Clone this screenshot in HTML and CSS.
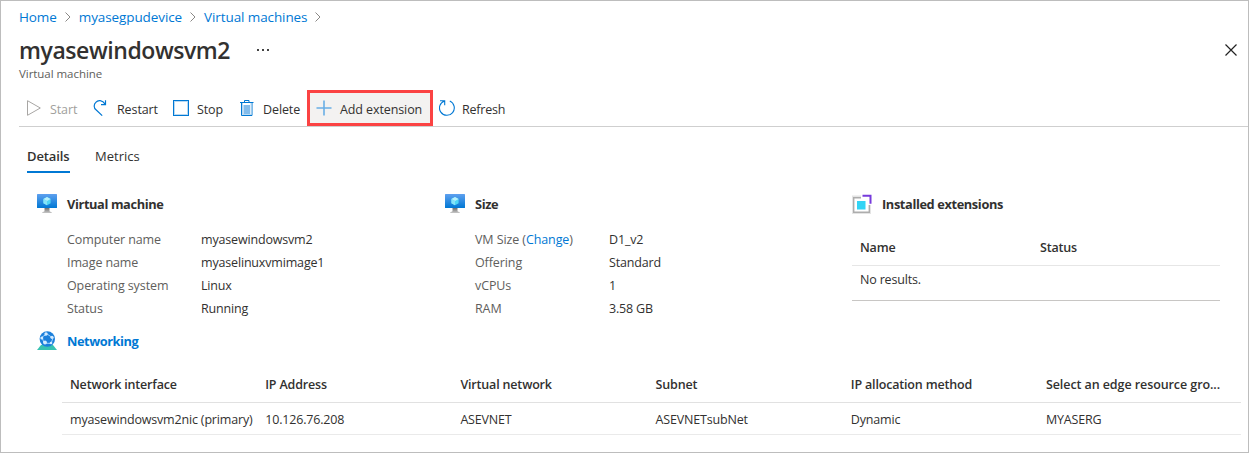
FILE: index.html
```html
<!DOCTYPE html>
<html lang="en">
<head>
<meta charset="utf-8">
<title>myasewindowsvm2</title>
<link rel="stylesheet" href="styles.css">
</head>
<body>
<svg width="0" height="0" class="defs" aria-hidden="true">
  <defs>
    <linearGradient id="screen" x1="0" y1="0" x2="0" y2="1"><stop offset="0" stop-color="#5ea0ef"/><stop offset="1" stop-color="#0078d4"/></linearGradient>
    <linearGradient id="stand" x1="0" y1="0" x2="0" y2="1"><stop offset="0" stop-color="#707070"/><stop offset="1" stop-color="#c8c8c8"/></linearGradient>
    <symbol id="vm" viewBox="0 0 20 20">
      <path d="M7.5 14h5v3.2l2.4 1.2v.6H5.1v-.6l2.4-1.2z" fill="url(#stand)"/>
      <rect x="0" y="0" width="20" height="14" rx=".5" fill="url(#screen)"/>
      <path d="M10 3l3.6 2v4.2L10 11.300 6.400 9.200V5z" fill="#50d6f5"/>
      <path d="M10 3l3.600 2L10 7.100 6.400 5z" fill="#b8f0fc"/>
      <path d="M6.400 5L10 7.100v4.200L6.400 9.200z" fill="#86e3f8"/>
    </symbol>
  </defs>
</svg>
<main class="page">
  <nav class="crumbs">
    <a>Home</a><svg class="chev" viewBox="0 0 6 10"><path d="M.5.5L5 5 .5 9.500"/></svg>
    <a>myasegpudevice</a><svg class="chev" viewBox="0 0 6 10"><path d="M.5.5L5 5 .5 9.500"/></svg>
    <a>Virtual machines</a><svg class="chev" viewBox="0 0 6 10"><path d="M.5.5L5 5 .5 9.500"/></svg>
  </nav>
  <header class="head">
    <h1 class="title">myasewindowsvm2</h1>
    <svg class="more" viewBox="0 0 12 2"><path d="M0 0h2v2H0zM5 0h2v2H5zM10 0h2v2h-2z" fill="#444"/></svg>
    <svg class="close" viewBox="0 0 12 12"><path d="M.5.5l11 11M11.500.5l-11 11" fill="none" stroke="#222" stroke-width="1.2"/></svg>
  </header>
  <p class="subtitle">Virtual machine</p>

  <div class="toolbar">
    <button class="tool start"><svg viewBox="0 0 16 16"><path d="M1.500.7v14.600L14.300 8z" fill="none" stroke="#a8a6a4"/></svg><span>Start</span></button>
    <button class="tool restart"><svg viewBox="0 0 16 16"><path d="M9.200 15.600L3 9.800A4.900 4.900 0 0 1 2.800 2.400C5-.2 9.300-.2 12.300 4.300M12.500.2v4.500H8" fill="none" stroke="#0078d4" stroke-width="1.200"/></svg><span>Restart</span></button>
    <button class="tool stop"><svg viewBox="0 0 16 16"><rect x=".5" y=".5" width="15" height="15" fill="#fff" stroke="#0078d4"/><rect x="1.500" y="1.500" width="13" height="13" fill="none" stroke="#b9d9f2"/></svg><span>Stop</span></button>
    <button class="tool delete"><svg viewBox="0 0 16 16"><path d="M2.500 3v12.500h10.500V3" fill="#fff" stroke="#0078d4"/><rect x="4.500" y="5" width="6.500" height="9" fill="#83bceb"/><path d="M3.500 3v11.500h8.500V3" fill="none" stroke="#b9d9f2"/><path d="M1 2.500h13.500M5.500 2.500V.5H10v2" fill="none" stroke="#0078d4"/></svg><span>Delete</span></button>
    <button class="tool add"><svg viewBox="0 0 16 16"><path d="M8 .5v15M.5 8h15" stroke="#69aee5" stroke-width="1.600"/></svg><span>Add extension</span></button>
    <button class="tool refresh"><svg viewBox="0 0 16 16"><path d="M5.500.9A7.400 7.400 0 1 0 10.800 1.100M1 .8h4.700v4.500" fill="none" stroke="#0078d4" stroke-width="1.100"/></svg><span>Refresh</span></button>
  </div>

  <div class="tabs">
    <span class="tab active">Details</span>
    <span class="tab">Metrics</span>
  </div>

  <div class="panels">
    <section class="panel">
      <h2 class="heading"><svg class="icon"><use href="#vm"/></svg><span>Virtual machine</span></h2>
      <dl class="facts">
        <dt>Computer name</dt><dd>myasewindowsvm2</dd>
        <dt>Image name</dt><dd>myaselinuxvmimage1</dd>
        <dt>Operating system</dt><dd>Linux</dd>
        <dt>Status</dt><dd>Running</dd>
      </dl>
    </section>
    <section class="panel">
      <h2 class="heading"><svg class="icon"><use href="#vm"/></svg><span>Size</span></h2>
      <dl class="facts">
        <dt>VM Size (<a>Change</a>)</dt><dd>D1_v2</dd>
        <dt>Offering</dt><dd>Standard</dd>
        <dt>vCPUs</dt><dd>1</dd>
        <dt>RAM</dt><dd>3.58 GB</dd>
      </dl>
    </section>
    <section class="panel">
      <h2 class="heading"><svg class="icon" viewBox="0 0 20 20"><path d="M9 2.500H1v16.500h17v-8" fill="none" stroke="#e4e4e4" stroke-width="2"/><path d="M9 3.700H1.700V18.300H17.300V11" fill="none" stroke="#adadad" stroke-width="1.400"/><path d="M10.500 1.800h8v8" fill="none" stroke="#773adc" stroke-width="2"/><rect x="5" y="7" width="8.500" height="8.500" fill="#32d4f5"/></svg><span>Installed extensions</span></h2>
      <div class="ext">
        <div class="ext-head"><span>Name</span><span>Status</span></div>
        <div class="ext-empty">No results.</div>
      </div>
    </section>
  </div>

  <section class="net">
    <h2 class="heading link"><svg class="icon" viewBox="0 0 20 20"><path d="M4 14h12l4 5H0z" fill="#37c2b1"/><circle cx="10.300" cy="8" r="7.700" fill="#1b7fdb"/><path d="M10 3L5 6l2 6 7 .5L16 7z" fill="none" stroke="#9cd2ff" stroke-width="1"/><g fill="#d4ebff"><circle cx="9" cy="3" r="1.700"/><circle cx="4.800" cy="7" r="1.500"/><circle cx="8" cy="11.500" r="1.900"/><circle cx="14" cy="12" r="1.300"/><circle cx="15" cy="6.300" r="1.600"/></g></svg><span>Networking</span></h2>
    <div class="grid grid-head">
      <span>Network interface</span><span>IP Address</span><span>Virtual network</span><span>Subnet</span><span>IP allocation method</span><span class="wide">Select an edge resource gro...</span>
    </div>
    <div class="grid grid-row">
      <span>myasewindowsvm2nic (primary)</span><span>10.126.76.208</span><span>ASEVNET</span><span>ASEVNETsubNet</span><span>Dynamic</span><span>MYASERG</span>
    </div>
  </section>
</main>
</body>
</html>
```
FILE: styles.css
```css
* { box-sizing: border-box; }
body {
  margin: 0;
  background: #fff;
  color: #323130;
  font: 12.5px/20px "Open Sans", "Noto Sans", sans-serif;
  letter-spacing: -0.17px;
}
h1, h2, p, dl, dd { margin: 0; }
a { color: #0078d4; }
svg { flex: none; display: block; }
.defs { position: absolute; }
.page {
  width: 1249px;
  height: 453px;
  border: 1px solid #bdbdbd;
  overflow: hidden;
}
.crumbs {
  display: flex;
  align-items: center;
  height: 18px;
  margin: 7px 0 0 18px;
  font-size: 13.5px;
  letter-spacing: -0.1px;
}
.chev {
  width: 6px;
  height: 10px;
  margin: 0 8px;
  fill: none;
  stroke: #8a8886;
}
.head {
  display: flex;
  align-items: center;
  height: 36px;
  margin: 6px 11px 0 18px;
}
.title {
  width: 211px;
  font-size: 23px;
  line-height: 36px;
  font-weight: 600;
  letter-spacing: -0.43px;
  white-space: nowrap;
}
.more { width: 12px; height: 2px; margin-left: 27px; }
.close { width: 12px; height: 12px; margin-left: auto; }
.subtitle {
  height: 16px;
  margin: -2px 0 0 18px;
  color: #605e5c;
  font-size: 11.5px;
  line-height: 16px;
  letter-spacing: -0.05px;
}
.toolbar {
  display: flex;
  height: 45px;
  margin-left: 18px;
  padding-top: 8px;
  border-bottom: 1px solid #cfcfcf;
}
.tool {
  display: flex;
  align-items: center;
  gap: 8px;
  height: 36px;
  padding: 0;
  border: 0;
  background: none;
  color: inherit;
  font: inherit;
  letter-spacing: -0.1px;
  white-space: nowrap;
}
.tool svg { width: 16px; height: 16px; }
.tool span { padding-top: 3px; }
.start { width: 74px; padding-left: 7px; color: #a19f9d; }
.restart { width: 80px; }
.stop { width: 66px; }
.delete { width: 68px; }
.add {
  width: 126px;
  padding-left: 6px;
  border: 3px solid #fb4343;
  background: #f3f2f1;
}
.refresh { padding-left: 6px; gap: 7px; letter-spacing: -0.2px; }
.tabs {
  display: flex;
  gap: 25px;
  margin: 17px 0 0 26px;
  font-size: 13px;
  letter-spacing: 0;
}
.tab { height: 29px; line-height: 24px; }
.active { width: 43px; border-bottom: 2px solid #0078d4; font-weight: 600; letter-spacing: -.1px; }
.panels {
  display: grid;
  grid-template-columns: 408px 407px 368px;
  height: 137px;
  margin: 21px 0 0 36px;
}
.heading {
  display: flex;
  align-items: center;
  gap: 10px;
  height: 20px;
  font-size: 12.8px;
  font-weight: 700;
  letter-spacing: -0.38px;
}
.icon { width: 20px; height: 20px; }
.facts {
  display: grid;
  grid-template-columns: 134px 1fr;
  grid-auto-rows: 23px;
  margin: 14px 0 0 30px;
  line-height: 23px;
}
.facts dt { color: #605e5c; letter-spacing: -0.1px; }
.ext { margin-top: 15px; border-bottom: 1px solid #c8c6c4; }
.ext-head {
  display: grid;
  grid-template-columns: 180px 1fr;
  height: 37px;
  padding-left: 8px;
  border-bottom: 1px solid #e6e6e6;
  font-weight: 600;
  line-height: 37px;
}
.ext-empty { height: 34px; padding-left: 8px; line-height: 28px; }
.net { margin: 0 7px 0 36px; }
.link { color: #0078d4; letter-spacing: -0.45px; }
.grid {
  display: grid;
  grid-template-columns: repeat(6, 195.200px);
  width: 1179px;
  margin-left: 25px;
  padding-left: 8px;
  white-space: nowrap;
}
.grid-head {
  height: 37px;
  margin-top: 15px;
  border-bottom: 1px solid #e1e1e1;
  font-weight: 600;
  line-height: 38px;
}
.wide { letter-spacing: -0.08px; }
.grid-row { height: 32px; border-bottom: 1px solid #eaeaea; line-height: 33px; }
```
